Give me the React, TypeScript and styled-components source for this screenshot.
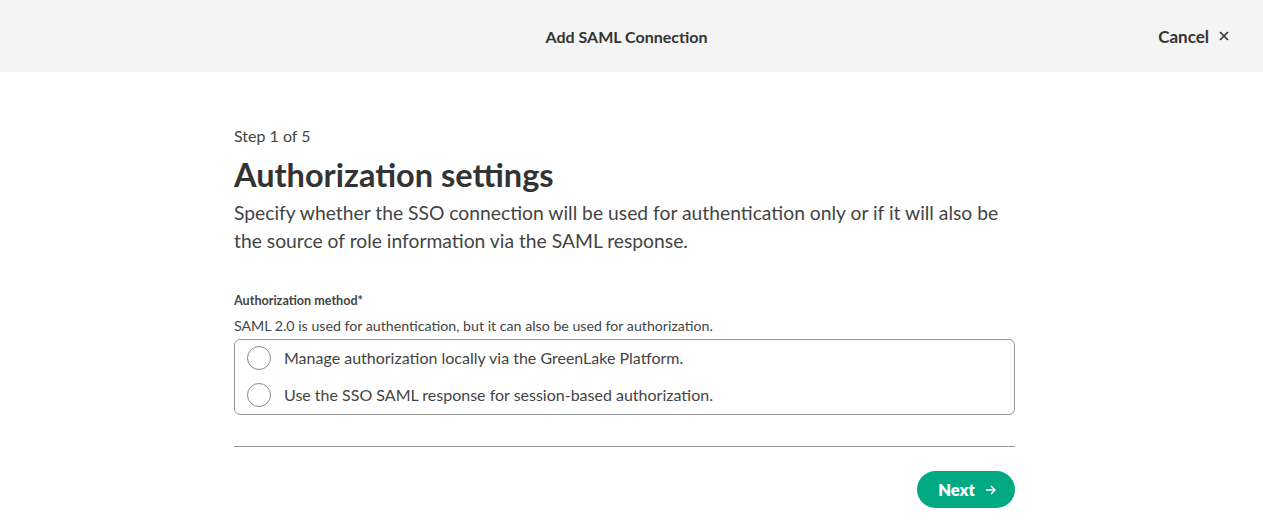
import React from "react";
import styled, { createGlobalStyle } from "styled-components";

const Global = createGlobalStyle`
  html, body { margin: 0; padding: 0; background: #ffffff; }
  body { font-family: Lato, "Noto Sans", sans-serif; color: #333333; }
  * { box-sizing: border-box; }
`;

const Page = styled.div`
  display: flex;
  flex-direction: column;
  min-height: 532px;
`;

const Header = styled.header`
  height: 72px;
  background: #f4f4f4;
  display: grid;
  grid-template-columns: 1fr auto 1fr;
  align-items: center;
  padding: 0 34px 0 24px;
`;

const HeaderTitle = styled.h1`
  grid-column: 2;
  margin: 0;
  font-size: 16px;
  font-weight: 700;
  color: #333;
`;

const CancelButton = styled.button`
  grid-column: 3;
  justify-self: end;
  display: flex;
  align-items: center;
  gap: 10px;
  background: none;
  border: none;
  padding: 0;
  font-family: inherit;
  font-size: 17px;
  font-weight: 700;
  color: #333;
`;

const Main = styled.main`
  width: 795px;
  margin: 0 auto;
  padding: 54px 14px 0 0;
  display: flex;
  flex-direction: column;
`;

const StepText = styled.div`
  font-size: 16px;
  color: #444;
  line-height: 20px;
`;

const Heading = styled.h2`
  margin: 11px 0 0;
  font-size: 32.5px;
  font-weight: 700;
  line-height: 36px;
  color: #333;
`;

const Description = styled.p`
  margin: 6px 0 0;
  font-size: 19.3px;
  line-height: 28px;
  color: #444;
`;

const Field = styled.div`
  margin-top: 38px;
  display: flex;
  flex-direction: column;
`;

const Label = styled.label`
  font-size: 12.6px;
  font-weight: 700;
  line-height: 16px;
  color: #444;
`;

const Help = styled.div`
  margin-top: 8px;
  font-size: 14.2px;
  line-height: 18px;
  color: #444;
`;

const OptionsBox = styled.div`
  margin-top: 4px;
  border: 1px solid #999;
  border-radius: 6px;
  padding: 6px 12px 7px;
  display: flex;
  flex-direction: column;
  gap: 13px;
`;

const Option = styled.label`
  display: flex;
  align-items: center;
  gap: 13px;
  font-size: 16px;
  line-height: 24px;
  color: #444;
`;

const RadioCircle = styled.span`
  width: 24px;
  height: 24px;
  border-radius: 50%;
  border: 1px solid #888;
  flex-shrink: 0;
`;

const Divider = styled.hr`
  margin: 31px 0 0;
  border: none;
  border-top: 1px solid #999;
  width: 100%;
`;

const Footer = styled.div`
  display: flex;
  justify-content: flex-end;
  margin-top: 24px;
`;

const NextButton = styled.button`
  height: 37px;
  width: 98px;
  border-radius: 19px;
  border: none;
  background: #01a982;
  color: #fff;
  font-family: inherit;
  font-size: 16.5px;
  font-weight: 800;
  display: flex;
  align-items: center;
  justify-content: center;
  gap: 10px;
  padding-right: 4px;
`;

const Close = () => (
  <svg width="10" height="10" viewBox="0 0 10 10" fill="none" stroke="#333" strokeWidth="1.6">
    <path d="M1 1 L9 9 M9 1 L1 9" />
  </svg>
);

const Arrow = () => (
  <svg width="11" height="10" viewBox="0 0 11 10" fill="none" stroke="#fff" strokeWidth="1.5">
    <path d="M1 5 H10 M6 1 L10 5 L6 9" />
  </svg>
);

export default function App() {
  return (
    <Page>
      <Global />
      <Header>
        <HeaderTitle>Add SAML Connection</HeaderTitle>
        <CancelButton>
          Cancel <Close />
        </CancelButton>
      </Header>
      <Main>
        <StepText>Step 1 of 5</StepText>
        <Heading>Authorization settings</Heading>
        <Description>
          Specify whether the SSO connection will be used for authentication only or if it will also be
          the source of role information via the SAML response.
        </Description>
        <Field>
          <Label>Authorization method*</Label>
          <Help>SAML 2.0 is used for authentication, but it can also be used for authorization.</Help>
          <OptionsBox>
            <Option>
              <RadioCircle />
              Manage authorization locally via the GreenLake Platform.
            </Option>
            <Option>
              <RadioCircle />
              Use the SSO SAML response for session-based authorization.
            </Option>
          </OptionsBox>
        </Field>
        <Divider />
        <Footer>
          <NextButton>
            Next <Arrow />
          </NextButton>
        </Footer>
      </Main>
    </Page>
  );
}
